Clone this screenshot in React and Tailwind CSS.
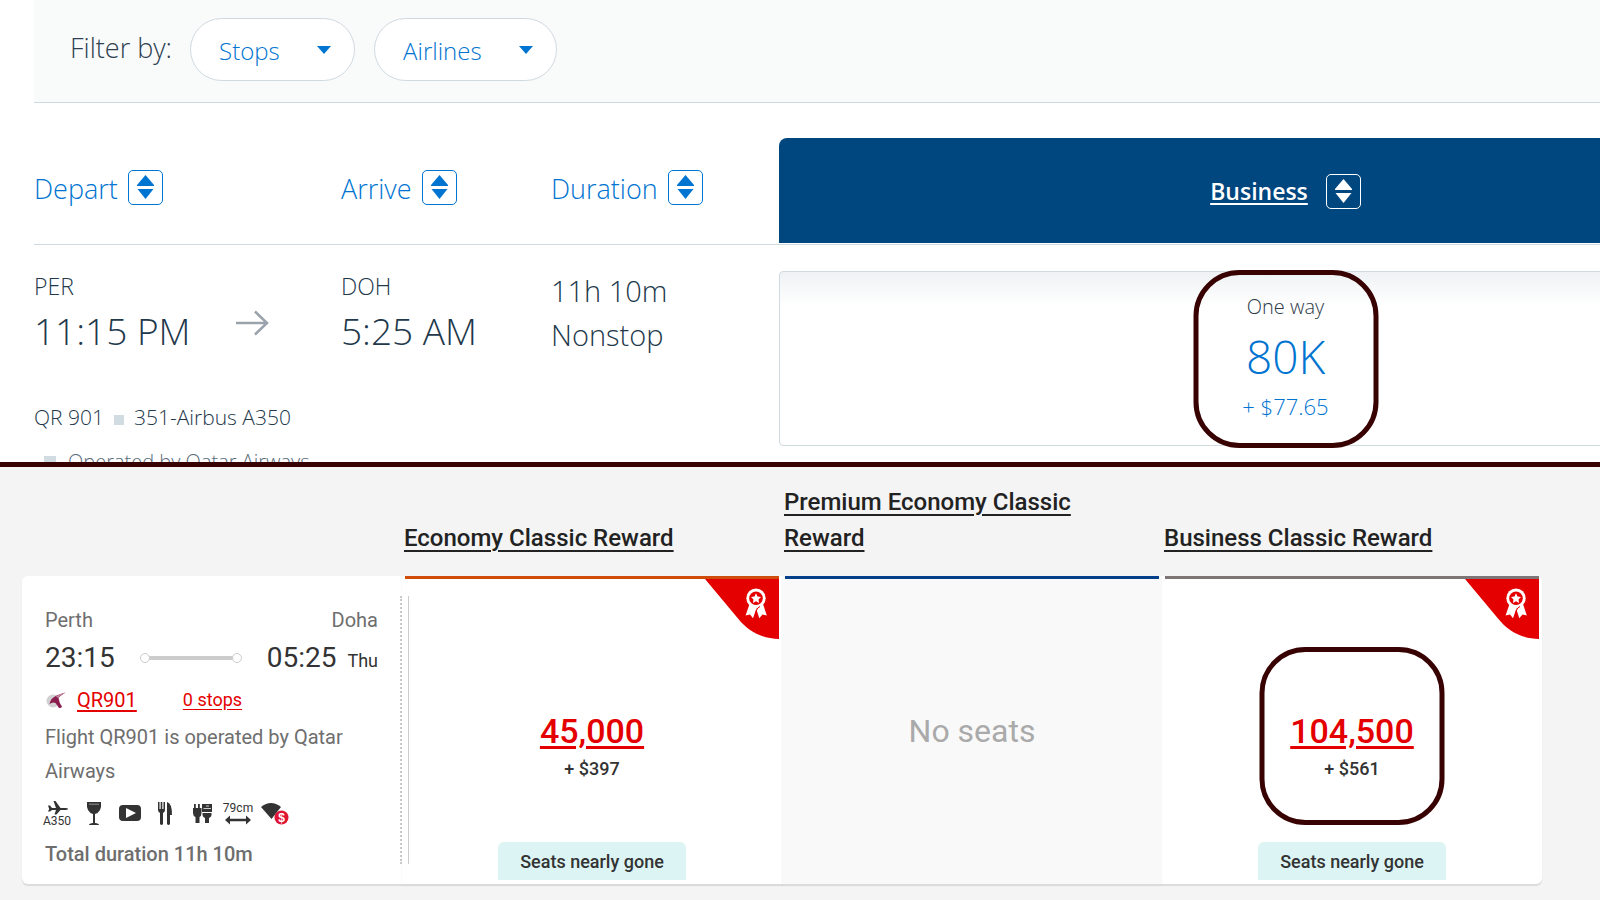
// src/App.jsx

const businessFare = { label: 'One way', miles: '80K', taxes: '+ $77.65' };

const rewards = [
  { name: 'Economy Classic Reward', bar: 'bg-[#d04c0a]', points: '45,000', taxes: '+ $397', note: 'Seats nearly gone' },
  { name: 'Premium Economy Classic Reward', bar: 'bg-[#04408a]' },
  { name: 'Business Classic Reward', bar: 'bg-[#7d7576]', points: '104,500', taxes: '+ $561', note: 'Seats nearly gone', highlight: true },
];

function FilterSelect({ label }) {
  return (
    <div className="relative">
      <select
        aria-label={label}
        className="appearance-none h-[63px] pt-0.5 pl-7 pr-[74px] rounded-full border border-[#d0d9e0] bg-white text-2xl text-[#0074d1]"
      >
        <option>{label}</option>
      </select>
      <svg viewBox="0 0 14 8" className="absolute right-6 top-7 w-3.5 h-2 pointer-events-none" fill="#0074d1">
        <path d="M0 0h14L7 8z" />
      </svg>
    </div>
  );
}

function SortButton({ label, light }) {
  const colors = light ? 'border-white text-white' : 'border-[#0074d1] text-[#0074d1]';
  return (
    <button type="button" aria-label={`Sort by ${label}`} className={`w-[35px] h-[35px] rounded-[5px] border ${colors}`}>
      <svg viewBox="0 0 33 33" fill="currentColor">
        <path d="M16.5 4 25 14v1H8v-1z" />
        <path d="M8.5 18h16l-8 10z" />
      </svg>
    </button>
  );
}

function SortHeader({ label }) {
  return (
    <th className="p-0 pt-[67px] align-top border-b border-[#cfd9e0] font-light">
      <div className="flex items-end gap-2.5 text-[27px] leading-8 text-[#0074d1]">
        <span>{label}</span>
        <SortButton label={label} />
      </div>
    </th>
  );
}

// Rounded outline drawn around the price that matters
function Highlight() {
  return (
    <div className="absolute left-1/2 top-1/2 -translate-x-1/2 -translate-y-1/2 w-[185px] h-[178px] rounded-[46px] border-5 border-[#380202] pointer-events-none" />
  );
}

function AwardCorner() {
  return (
    <svg viewBox="0 0 74 60" className="w-[74px] h-[60px] ml-auto">
      <path d="M0 0H74V60C56 59.500 43 52 33 39.500z" fill="#e40000" />
      <g fill="#fff">
        <path d="M44.500 25 40.600 36.500 45 35.500 48 39.300 51.200 30 52 27z" />
        <path d="M58 25 61.800 36.500 57.500 35.500 54.300 39.300 51.300 30 52 27z" />
        <circle cx="51" cy="19.200" r="9.700" />
      </g>
      <path d="M55 27.500Q50.500 29 50.500 38.500" fill="none" stroke="#e40000" strokeWidth="1" />
      <circle cx="51" cy="19.200" r="6.800" fill="#e40000" />
      <path
        d="m51 14.200 1.500 3.200 3.500.5-2.500 2.500.6 3.500-3.100-1.700-3.100 1.700.6-3.500-2.500-2.500 3.500-.5z"
        fill="#fff"
      />
    </svg>
  );
}

function OryxLogo() {
  return (
    <svg viewBox="0 0 22 20" className="w-[22px] h-5">
      <circle cx="8" cy="11" r="6.500" fill="#d3d0d3" />
      <path d="M20.500 2.500C15 4 11 5.500 8.500 7.500 6 9 5 12 4.500 14c2-1.500 4-2 6-1l3.500 5c1.500 0 2.500-.5 3-1.500C15 14 14 11 13.500 8c2-2.500 4.500-3.500 7-5.500z" fill="#8a1c4e" />
      <path d="M20.500 2.500C17 3.500 13 5 11 6.500l2 1.500c2-2.500 4.500-3.500 7.500-5.500z" fill="#c58ba5" />
    </svg>
  );
}

function Amenities() {
  return (
    <div className="mt-3 flex gap-[10px] text-[#333]">
      <svg viewBox="0 0 26 26" className="w-[26px] h-[26px] overflow-visible" fill="currentColor">
        <path d="M3 5.500 5 5.500 7 8H11L8.500 1 10.500 1 15.500 8H20.500Q23 8 23 9T20.500 10H15.500L11.500 14.500H9.500L11 10H7L5 11.500H3L4.200 9z" />
        <text x="12" y="25" textAnchor="middle" fontFamily="Roboto, sans-serif" fontSize="12">A350</text>
      </svg>
      <svg viewBox="0 0 26 26" className="w-[26px] h-[26px]" fill="currentColor">
        <path d="M6 2H20Q21 12 14 14V23Q18 23.500 18 25H8Q8 23.500 12 23V14Q5 12 6 2z" />
        <path d="M8 4.200H18" stroke="#aaa" strokeWidth="0.8" />
      </svg>
      <svg viewBox="0 0 26 26" className="w-[26px] h-[26px]" fill="currentColor">
        <rect x="2" y="5" width="22" height="16" rx="4" />
        <path d="M9 8 19 13 9 18z" fill="#fff" />
      </svg>
      <svg viewBox="0 0 26 26" className="w-[26px] h-[26px]" fill="currentColor">
        <path d="M5 2H6.500V9H7.700V2H9.300V9H10.500V2H12V10Q12 12 10 13V24Q8.500 26 7 24V13Q5 12 5 10z" />
        <path d="M14 2Q19 3 19 15H17V24Q15.500 26 14 24z" />
      </svg>
      <svg viewBox="0 0 26 26" className="w-[26px] h-[26px]" fill="currentColor">
        <path d="M5 4H6.800V8H9V4H10.800V8H12.500V13Q12.500 16 10.500 17V23H6.500V17Q4 16 4 13V8H5z" />
        <path d="M13 4H23V12H13z" />
        <path d="M14.500 8.500H22M17 6H20" stroke="#ccc" strokeWidth="1.200" />
        <path d="M13.500 13H22.500Q23 17 20 18V23H16V18Q13 17 13.500 13z" />
      </svg>
      <svg viewBox="0 0 26 26" className="w-[26px] h-[26px] overflow-visible" fill="currentColor">
        <text x="13" y="12" textAnchor="middle" fontFamily="Roboto, sans-serif" fontSize="12">79cm</text>
        <path d="M0 20 5 15.500V18.800H21V15.500L26 20 21 24.500V21.200H5V24.500z" />
      </svg>
      <svg viewBox="0 0 28 26" className="w-[28px] h-[26px]" fill="currentColor">
        <path d="M0 7Q10 -1 20 7L10.500 19z" />
        <circle cx="20.500" cy="17.500" r="7" fill="#df1332" />
        <text x="20.500" y="22" textAnchor="middle" fill="#fff" fontFamily="Liberation Sans, sans-serif" fontWeight="700" fontSize="12">$</text>
      </svg>
    </div>
  );
}

function FilterBar() {
  return (
    <div className="ml-[34px] pl-9 pt-[18px] pb-[21px] flex items-center bg-[#f9fbfb] border-b border-[#cfd9e0]">
      <span className="pb-1 text-[27px] leading-8 mr-[18px] text-[#2d3f50]">Filter by:</span>
      <div className="flex gap-[19px]">
        <FilterSelect label="Stops" />
        <FilterSelect label="Airlines" />
      </div>
    </div>
  );
}

function MilesTable() {
  return (
    <div className="pl-[34px]">
      <table className="w-full table-fixed border-separate border-spacing-0 text-left text-[#22384b]">
        <colgroup>
          <col className="w-[307px]" />
          <col className="w-[210px]" />
          <col className="w-[228px]" />
          <col />
        </colgroup>
        <thead>
          <tr>
            <SortHeader label="Depart" />
            <SortHeader label="Arrive" />
            <SortHeader label="Duration" />
            <th className="p-0 pt-[35px] pb-px border-b border-[#cfd9e0]">
              <div className="h-[105px] pt-0.5 flex items-center justify-center gap-[18px] rounded-tl-lg bg-[#00467f] text-white">
                <a href="#business" className="text-[23px] font-semibold underline decoration-2 underline-offset-3">Business</a>
                <SortButton label="Business" light />
              </div>
            </th>
          </tr>
        </thead>
        <tbody>
          <tr className="align-top">
            <td className="p-0 pt-[26px]">
              <p className="text-[23px] leading-[30px]">PER</p>
              <div className="flex items-center justify-between pr-[72px]">
                <p className="text-[37px] leading-[60px]">11:15 PM</p>
                <svg viewBox="0 0 34 26" className="w-[34px] h-[26px] -mt-4" fill="none" stroke="#9aa3ab" strokeWidth="2.5">
                  <path d="M1 13H32M20 1.500 32 13 20 24.500" />
                </svg>
              </div>
              <p className="mt-[34px] flex items-center text-[21px] leading-11 whitespace-nowrap">
                QR 901
                <span className="w-2.5 h-2.5 mx-2.5 mt-1.5 bg-[#d0dbe2]" />
                351-Airbus A350
              </p>
              <p className="flex items-center pl-2.5 text-xl leading-[46px] whitespace-nowrap text-[#5a6c79]">
                <span className="w-3 h-3 mr-3 bg-[#d0dbe2]" />
                Operated by Qatar Airways
              </p>
            </td>
            <td className="p-0 pt-[26px]">
              <p className="text-[23px] leading-[30px]">DOH</p>
              <p className="text-[37px] leading-[60px]">5:25 AM</p>
            </td>
            <td className="p-0 pt-6 text-[29px] leading-11">
              <p>11h 10m</p>
              <p>Nonstop</p>
            </td>
            <td className="p-0 pt-[26px]">
              <div className="relative h-[175px] pt-[18px] rounded border border-[#cfdbe0] bg-linear-to-b from-[#eff2f4] to-white to-20% text-center text-[#0074d1]">
                <p className="text-xl leading-[34px] text-[#2d3b48]">{businessFare.label}</p>
                <p className="text-[46px] leading-16">{businessFare.miles}</p>
                <p className="text-[22px] leading-9">{businessFare.taxes}</p>
                <Highlight />
              </div>
            </td>
          </tr>
        </tbody>
      </table>
    </div>
  );
}

function FlightCell() {
  return (
    <div className="my-5 h-[268px] pl-[23px] pr-[22px] pt-2 border-r-2 border-dotted border-[#c9c9c9] text-xl text-[#6e6e6e]">
      <div className="flex justify-between leading-8">
        <span>Perth</span>
        <span>Doha</span>
      </div>
      <div className="flex items-center justify-between text-[28px] leading-11 text-[#333]">
        <span>23:15</span>
        <svg viewBox="0 0 102 12" className="w-[102px] h-3">
          <path d="M5 6H97" stroke="#ccc" strokeWidth="4" />
          <circle cx="5" cy="6" r="4.500" fill="#fff" stroke="#ccc" />
          <circle cx="97" cy="6" r="4.500" fill="#fff" stroke="#ccc" />
        </svg>
        <span>
          05:25 <span className="ml-1 text-lg">Thu</span>
        </span>
      </div>
      <div className="flex items-center leading-10">
        <OryxLogo />
        <a href="#qr901" className="ml-2.5 text-[#e40000] underline decoration-2 underline-offset-3">QR901</a>
        <a href="#stops" className="ml-[46px] text-lg leading-10 text-[#e40000] underline underline-offset-3">0 stops</a>
      </div>
      <p className="leading-[34px]">Flight QR901 is operated by Qatar Airways</p>
      <Amenities />
      <p className="mt-3 leading-8 font-medium">Total duration 11h 10m</p>
    </div>
  );
}

function RewardCell({ reward }) {
  return (
    <div className="h-[308px] flex flex-col pl-[3px] pr-[3px]">
      <div className={`h-[3px] ${reward.bar}`} />
      {reward.points ? (
        <>
          <AwardCorner />
          <div className="relative mt-[46px] pt-[26px] flex flex-col items-center font-medium text-[#333]">
            <a href="#select" className="text-[34px] leading-10 text-[#e40000] underline decoration-3 underline-offset-3">{reward.points}</a>
            <p className="text-lg leading-9">{reward.taxes}</p>
            {reward.highlight && <Highlight />}
          </div>
          <p className="mt-auto mb-1 mx-auto w-[188px] h-[38px] rounded-t-md bg-[#dcf5f4] text-center text-lg leading-10 font-medium text-[#333]">
            {reward.note}
          </p>
        </>
      ) : (
        <p className="mt-[132px] text-center text-[32px] leading-10 text-[#aaa]">No seats</p>
      )}
    </div>
  );
}

function PointsTable() {
  const cardShadow = 'shadow-[0_2px_1px_rgba(0,0,0,0.1)]';
  return (
    <table className="w-full table-fixed border-separate border-spacing-0 text-left">
      <thead>
        <tr className="h-[109px] align-bottom">
          <td className="p-0" />
          {rewards.map((reward) => (
            <th key={reward.name} className="p-0 pl-0.5 pr-16 pb-5 text-2xl leading-9 font-medium">
              <a href="#reward" className="text-[#222] underline decoration-2 underline-offset-4">{reward.name}</a>
            </th>
          ))}
        </tr>
      </thead>
      <tbody>
        <tr className="align-top">
          <td className={`p-0 bg-white rounded-l-md ${cardShadow}`}>
            <FlightCell />
          </td>
          {rewards.map((reward, i) => (
            <td
              key={reward.name}
              className={`relative p-0 last:rounded-r-md ${cardShadow} ${reward.points ? 'bg-white' : 'bg-[#f9f9f9]'}`}
            >
              {i === 0 && <div className="absolute left-1.5 inset-y-5 w-px bg-[#ccc]" />}
              <RewardCell reward={reward} />
            </td>
          ))}
        </tr>
      </tbody>
    </table>
  );
}

export default function App() {
  return (
    <div className="min-h-screen flex flex-col">
      <section className="h-[467px] overflow-hidden border-b-5 border-[#380202] bg-white font-['Open_Sans',sans-serif] font-light">
        {/* the fare column runs on past the right edge of the window */}
        <div className="w-[112%]">
          <FilterBar />
          <MilesTable />
        </div>
      </section>
      <section className="grow pl-[22px] pr-[58px] bg-[#f4f4f4] font-[Roboto,sans-serif]">
        <PointsTable />
      </section>
    </div>
  );
}
